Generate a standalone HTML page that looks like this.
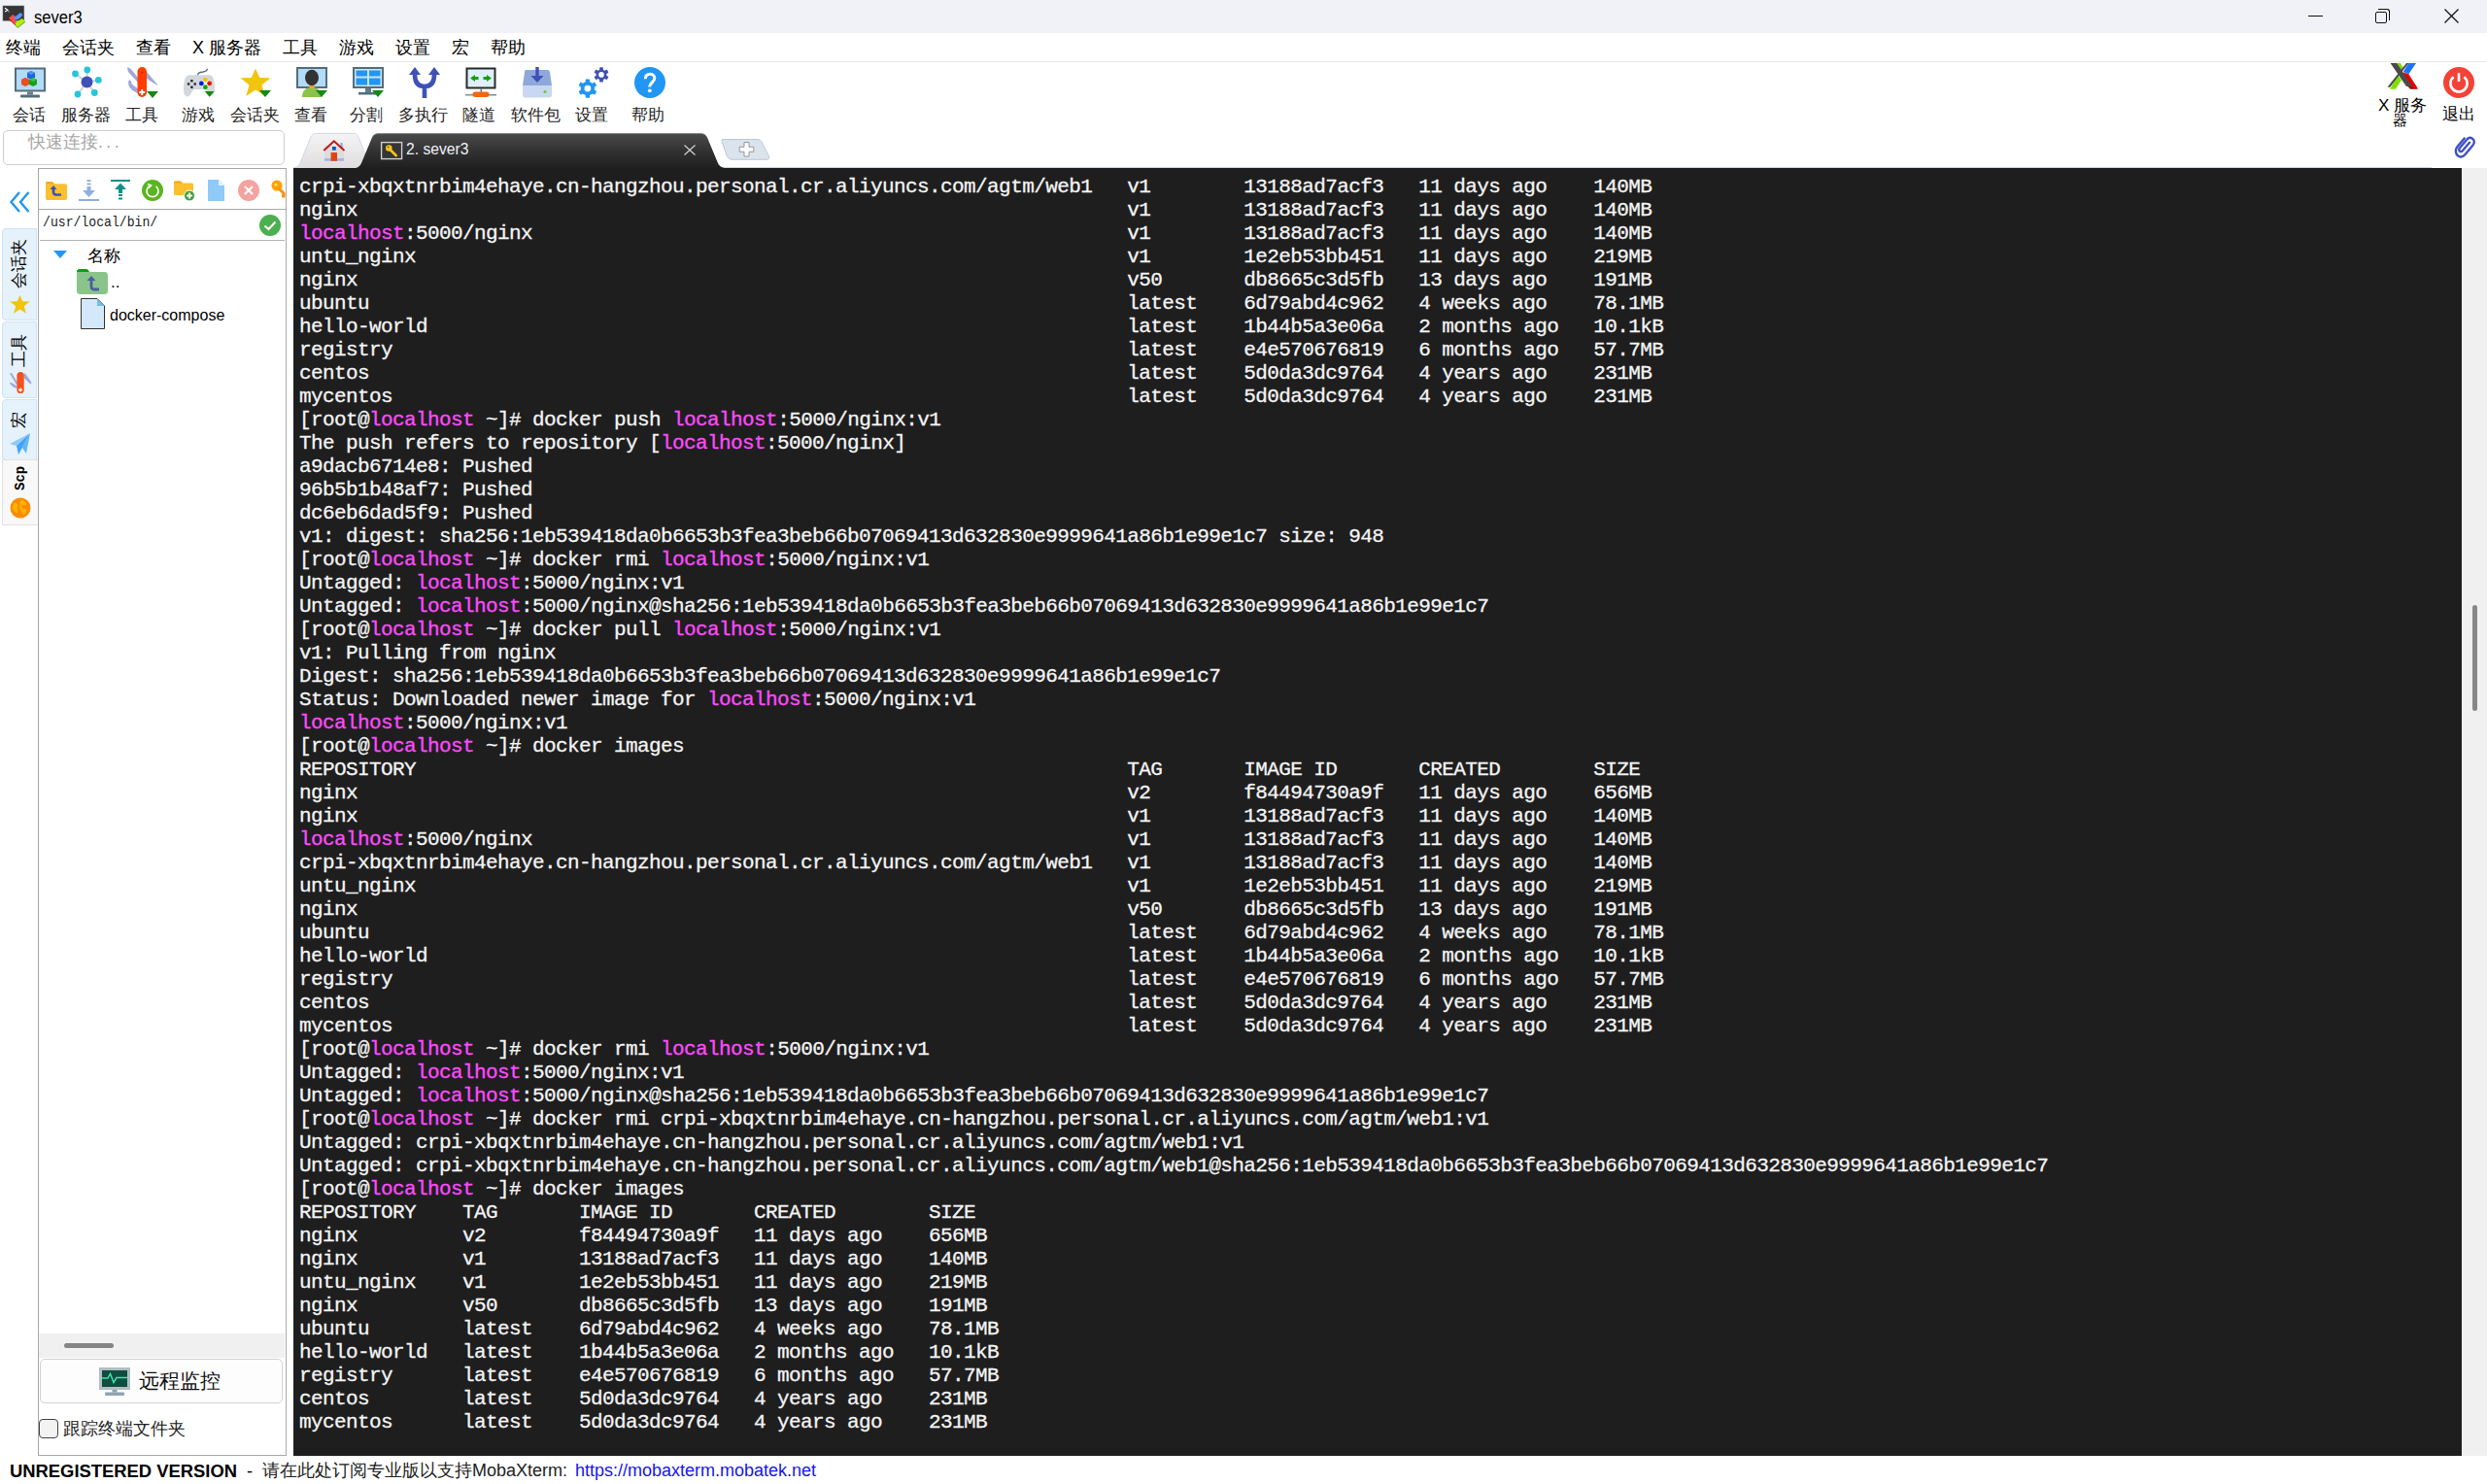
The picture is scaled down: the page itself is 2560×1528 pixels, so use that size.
<!DOCTYPE html>
<html><head><meta charset="utf-8"><title>sever3</title>
<style>
*{box-sizing:border-box}
html,body{margin:0;padding:0;width:2560px;height:1528px;overflow:hidden;background:#fff;font-family:"Liberation Sans",sans-serif;color:#000}
.a{position:absolute}
svg{position:absolute;overflow:visible}
#title{left:0;top:0;width:2560px;height:34px;background:#f1f2f7}
#title .t{left:35px;top:7px;font-size:18px;line-height:22px;transform:scaleX(0.92);transform-origin:0 0}
#menu{left:0;top:34px;width:2560px;height:30px;background:#fff;border-bottom:1px solid #e8e8e8}
#menu span{position:absolute;top:4px;font-size:18px;line-height:22px}
.lbl{position:absolute;top:109px;font-size:17px;line-height:20px;text-align:center;width:80px;white-space:nowrap;color:#262626}
#qc{left:3px;top:134px;width:290px;height:36px;border:1px solid #cfcfcf;border-radius:5px;background:#fff}
#qc span{position:absolute;left:25px;top:-1px;font-size:17.5px;color:#a8a8a8;white-space:nowrap}
#term{left:302px;top:173px;width:2232px;height:1326px;background:#1e1e1e}
#term pre{position:absolute;left:6px;top:8px;margin:0;font-family:"Liberation Mono",monospace;font-size:21px;letter-spacing:-0.6px;line-height:24px;color:#f4f4f4;white-space:pre;-webkit-text-stroke:0.3px #f4f4f4}
#term pre b{font-weight:normal;color:#ff4aff;-webkit-text-stroke:0.3px #ff4aff}
#vsb{left:2535px;top:173px;width:25px;height:1326px;background:#f0f0f0}
#vsb i{position:absolute;left:10px;top:450px;width:5px;height:109px;border-radius:3px;background:#878787}
#sftp{left:39px;top:173px;width:256px;height:1326px;border:1px solid #a9a9a9;background:#fff}
#status{left:0;top:1499px;width:2560px;height:29px;background:#fff}
.vt{position:absolute;left:2px;width:36px;background:#e5f1fb;border:1px solid #cfe3f3;border-radius:4px 0 0 4px}
.vtt{position:absolute;font-size:17px;line-height:20px;white-space:nowrap;transform:rotate(-90deg);transform-origin:0 0}
</style></head><body>

<div id="title" class="a">
  <svg style="left:0px;top:0px" width="30" height="32" viewBox="0 0 30 32">
    <rect x="2.8" y="5.8" width="22.2" height="16" fill="#353535" stroke="#cfcfcf" stroke-width="0.6"/>
    <path d="M5 8.3 L8 10.5 L5 12" stroke="#fff" stroke-width="1.1" fill="none"/>
    <rect x="8.5" y="11.5" width="1" height="1" fill="#ddd"/>
    <path d="M8.9 18.8 L13.2 15 L18 18.5 L16 20.5 L18 23.3 L16 25.3 Z" fill="#f05050"/>
    <path d="M8.9 18.8 L8.9 20 L16 26.5 L16 25.3 Z" fill="#c01818"/>
    <path d="M14.2 18.5 L20.8 13 L23.3 14.8 L22.5 16.8 L20 19 L17.6 20.5 Z" fill="#5599ff"/>
    <path d="M16 23.3 L22.5 19 L25.8 21.5 L18.4 27.8 L16 25.8 Z" fill="#b0f000"/>
    <path d="M16 25.8 L18.4 27.8 L25.8 21.5 L25.8 23 L18.4 29 L16 27 Z" fill="#6fb000"/>
  </svg>
  <div class="a t">sever3</div>
  <div class="a" style="left:2376px;top:16px;width:15px;height:1px;background:#111"></div>
  <div class="a" style="left:2445px;top:12px;width:12px;height:12px;border:1.3px solid #111;border-radius:2px"></div>
  <div class="a" style="left:2448px;top:9px;width:12px;height:12px;border-top:1.3px solid #111;border-right:1.3px solid #111;border-radius:0 3px 0 0"></div>
  <svg style="left:2516px;top:9px" width="15" height="15" viewBox="0 0 15 15"><path d="M0.5 0.5 L14.5 14.5 M14.5 0.5 L0.5 14.5" stroke="#111" stroke-width="1.3"/></svg>
</div>

<div id="menu" class="a">
  <span style="left:6px">终端</span>
  <span style="left:64px">会话夹</span>
  <span style="left:140px">查看</span>
  <span style="left:198px">X 服务器</span>
  <span style="left:291px">工具</span>
  <span style="left:349px">游戏</span>
  <span style="left:407px">设置</span>
  <span style="left:465px">宏</span>
  <span style="left:505px">帮助</span>
</div>

<div id="tb">
<!-- 1 session -->
<svg style="left:15px;top:69px" width="32" height="32" viewBox="0 0 32 32">
  <rect x="0" y="0.5" width="32" height="25" fill="#546e7a"/>
  <rect x="2" y="2.5" width="28" height="21" fill="#b3dbf7"/>
  <rect x="13" y="25.5" width="6" height="3" fill="#607d8b"/>
  <rect x="6" y="28.5" width="20" height="3" rx="1" fill="#546e7a"/>
  <path d="M13 6 L17 4 L21 6 L21 11 L17 13 L13 11 Z" fill="#1e63e0"/><path d="M13 6 L17 8 L21 6 L17 4Z" fill="#4f8ff5"/>
  <path d="M7 13 L11 11 L15 13 L15 18 L11 20 L7 18 Z" fill="#e8511e"/><path d="M7 13 L11 15 L15 13 L11 11Z" fill="#f4492b"/>
  <path d="M15 13 L19 11 L23 13 L23 18 L19 20 L15 18 Z" fill="#16a01e"/><path d="M15 13 L19 15 L23 13 L19 11Z" fill="#39c53a"/>
</svg>
<!-- 2 servers -->
<svg style="left:73px;top:69px" width="32" height="32" viewBox="0 0 32 32">
  <g stroke="#cfd8dc" stroke-width="2.2">
  <line x1="16.5" y1="15.6" x2="4.5" y2="7"/><line x1="16.5" y1="15.6" x2="16.8" y2="3"/><line x1="16.5" y1="15.6" x2="28.3" y2="13.4"/><line x1="16.5" y1="15.6" x2="24.3" y2="26.5"/><line x1="16.5" y1="15.6" x2="7" y2="28"/></g>
  <circle cx="16.5" cy="15.6" r="6" fill="#3f51b5"/>
  <g fill="#26c6da"><circle cx="4.5" cy="7" r="3.4"/><circle cx="16.8" cy="3" r="3.4"/><circle cx="28.3" cy="13.4" r="3.4"/><circle cx="24.3" cy="26.5" r="3.4"/><circle cx="7" cy="28" r="3.4"/></g>
</svg>
<!-- 3 tools -->
<svg style="left:131px;top:69px" width="32" height="32" viewBox="0 0 32 32">
  <path d="M0.3 0 C2 1 4 2 5 3.5 L11 11 L11 16 L1.5 5.5 C0.5 4 0 2 0.3 0Z" fill="#9fa8da"/>
  <path d="M1.5 14 C3 13 4.5 14 4 16 C5 18 7 20 11 22 L11 27 C6 25 2.5 22 1.5 19 C1 17 1 15 1.5 14Z" fill="#9fa8da"/>
  <path d="M20 5 L31 18 L31 19 L20 12 Z" fill="#9fa8da"/>
  <rect x="10.5" y="0" width="9.5" height="31" rx="4.7" fill="#ff3d00"/>
  <circle cx="15.3" cy="5.5" r="1.3" fill="#d83000"/>
  <path d="M15.2 23 v6 M12.2 26 h6" stroke="#fff" stroke-width="2"/>
  <path d="M20 25 L32 25 L26 32 Z" fill="#138a13"/>
</svg>
<!-- 4 games -->
<svg style="left:189px;top:69px" width="32" height="32" viewBox="0 0 32 32">
  <path d="M14.4 9.5 C14.4 6 16 5.5 20 5 C23 4.5 24.5 4 24.5 1.8" stroke="#546e7a" stroke-width="1.3" fill="none"/>
  <path d="M6 8.3 L27 8.3 C30 8.3 31.5 12 32 20 C32.3 26 31 30 28 30 C25 30 23.5 24 21 23 L11 23 C8.5 24 7 30.5 4 30.5 C1 30.5 -0.3 27 0 21 C0.5 13 2 8.3 6 8.3Z" fill="#d3d8dc"/>
  <g fill="#262626"><rect x="7.2" y="13" width="2.4" height="2.4"/><rect x="7.2" y="19.6" width="2.4" height="2.4"/><rect x="3.9" y="16.3" width="2.4" height="2.4"/><rect x="10.5" y="16.3" width="2.4" height="2.4"/></g>
  <path d="M22.4 10.2 L27.5 16.9 L22.4 23.6 L17.3 16.9Z" fill="#fff" opacity="0.9"/>
  <circle cx="22.4" cy="13.1" r="2.4" fill="#f2c200"/><circle cx="18.4" cy="16.9" r="2.4" fill="#0a14f0"/><circle cx="26.6" cy="16.9" r="2.4" fill="#f00a0a"/><circle cx="22.4" cy="20.7" r="2.4" fill="#0aac0a"/>
  <path d="M21.8 25 L31.5 25 L26.6 30.8 Z" fill="#138a13"/>
</svg>
<!-- 5 bookmarks -->
<svg style="left:247px;top:69px" width="32" height="32" viewBox="0 0 32 32">
  <path d="M16 1.5 L20.3 11 L31.5 11.3 L22.5 18.5 L25.8 30 L16 23.5 L6.2 30 L9.5 18.5 L0.5 11.3 L11.7 11 Z" fill="#f1c40f"/>
  <path d="M20 24 L32 24 L26 31 Z" fill="#138a13"/>
</svg>
<!-- 6 view -->
<svg style="left:305px;top:69px" width="32" height="32" viewBox="0 0 32 32">
  <rect x="0" y="0" width="32" height="22" fill="#546e7a"/>
  <rect x="2" y="2" width="28" height="18" fill="#b3dbf7"/>
  <path d="M6 31 C6 24 10 21 16 21 C22 21 26 24 26 31Z" fill="#8bc34a"/>
  <rect x="13.5" y="17" width="5" height="5" fill="#f4a030"/>
  <ellipse cx="16" cy="11" rx="7" ry="8.3" fill="#333"/>
  <path d="M20 24 L32 24 L26 31 Z" fill="#138a13"/>
</svg>
<!-- 7 split -->
<svg style="left:363px;top:69px" width="32" height="32" viewBox="0 0 32 32">
  <rect x="0" y="0" width="32" height="22" fill="#546e7a"/>
  <rect x="2" y="2" width="28" height="18" fill="#c7e4f7"/>
  <rect x="3.5" y="3.5" width="11.5" height="6" fill="#2196f3"/><rect x="17" y="3.5" width="11.5" height="6" fill="#2196f3"/>
  <rect x="3.5" y="11.5" width="11.5" height="7" fill="#2196f3"/><rect x="17" y="11.5" width="11.5" height="7" fill="#2196f3"/>
  <rect x="13" y="22" width="6" height="4" fill="#607d8b"/><rect x="6" y="26" width="20" height="2.5" fill="#546e7a"/>
  <path d="M20 24 L32 24 L26 31 Z" fill="#138a13"/>
</svg>
<!-- 8 multiexec -->
<svg style="left:421px;top:69px" width="32" height="32" viewBox="0 0 32 32">
  <path d="M16 32 L16 20 C8 20 6 14 6 8 M16 20 C24 20 26 14 26 8" stroke="#3f51b5" stroke-width="4.6" fill="none"/>
  <path d="M0 8 L6 0 L12 8Z M20 8 L26 0 L32 8Z" fill="#3f51b5"/>
</svg>
<!-- 9 tunneling -->
<svg style="left:479px;top:69px" width="32" height="32" viewBox="0 0 32 32">
  <rect x="0.5" y="0.5" width="31" height="22" fill="#2b2b2b"/>
  <rect x="2.5" y="2.5" width="27" height="18" fill="#dff0fb"/>
  <path d="M5 11.5 L10 8 L10 15Z M27 11.5 L22 8 L22 15Z" fill="#12a012"/>
  <rect x="9" y="10" width="4.5" height="3" fill="#12a012"/><rect x="18.5" y="10" width="4.5" height="3" fill="#12a012"/>
  <rect x="15.5" y="22" width="1.5" height="4" fill="#607d8b"/>
  <rect x="0" y="28" width="32" height="1.5" fill="#78909c"/>
  <rect x="7.5" y="25.5" width="17" height="5.5" rx="2.7" fill="#f4670f"/>
</svg>
<!-- 10 packages -->
<svg style="left:537px;top:69px" width="32" height="32" viewBox="0 0 32 32">
  <path d="M4 3 L27 3 C28 3 28.5 4 29 5 L31 19 L1 19 L3 5 C3 4 3.5 3 4 3Z" fill="#8ea9d9"/>
  <path d="M1 19 L31 19 L31 29 C31 30.5 30 31.5 28.5 31.5 L3.5 31.5 C2 31.5 1 30.5 1 29Z" fill="#c9d8f0"/>
  <rect x="14.3" y="0" width="3.4" height="10" fill="#3f51b5"/><path d="M9.5 9 L22.5 9 L16 16Z" fill="#3f51b5"/>
  <circle cx="24" cy="25.5" r="1.6" fill="#5ad33a"/>
</svg>
<!-- 11 settings -->
<svg style="left:595px;top:69px" width="32" height="32" viewBox="0 0 32 32"><circle cx="9.9" cy="22.1" r="7.2" fill="#2196f3"/><rect x="7.70" y="12.50" width="4.4" height="19.20" rx="0.6" fill="#2196f3" transform="rotate(0 9.9 22.1)"/><rect x="7.70" y="12.50" width="4.4" height="19.20" rx="0.6" fill="#2196f3" transform="rotate(60 9.9 22.1)"/><rect x="7.70" y="12.50" width="4.4" height="19.20" rx="0.6" fill="#2196f3" transform="rotate(120 9.9 22.1)"/><circle cx="9.9" cy="22.1" r="3.4" fill="#fff"/><circle cx="24" cy="7.9" r="5.4" fill="#3f51b5"/><rect x="22.15" y="0.30" width="3.7" height="15.20" rx="0.6" fill="#3f51b5" transform="rotate(0 24 7.9)"/><rect x="22.15" y="0.30" width="3.7" height="15.20" rx="0.6" fill="#3f51b5" transform="rotate(60 24 7.9)"/><rect x="22.15" y="0.30" width="3.7" height="15.20" rx="0.6" fill="#3f51b5" transform="rotate(120 24 7.9)"/><circle cx="24" cy="7.9" r="2.8" fill="#fff"/></svg>
<!-- 12 help -->
<svg style="left:653px;top:69px" width="32" height="32" viewBox="0 0 32 32">
  <circle cx="16" cy="16" r="16" fill="#2196f3"/>
  <path d="M11.3 12.3 C11.3 8.8 13.5 7.3 16.2 7.3 C19 7.3 20.8 9.2 20.8 11.6 C20.8 14.2 18.3 15.6 16.8 17.6 C16 18.7 15.7 19.6 15.7 20.5" stroke="#fff" stroke-width="3" fill="none"/>
  <circle cx="15.8" cy="24.3" r="1.9" fill="#fff"/>
</svg>

<div class="lbl" style="left:-10px">会话</div>
<div class="lbl" style="left:48px">服务器</div>
<div class="lbl" style="left:106px">工具</div>
<div class="lbl" style="left:164px">游戏</div>
<div class="lbl" style="left:222px">会话夹</div>
<div class="lbl" style="left:280px">查看</div>
<div class="lbl" style="left:337px">分割</div>
<div class="lbl" style="left:395px">多执行</div>
<div class="lbl" style="left:453px">隧道</div>
<div class="lbl" style="left:511px">软件包</div>
<div class="lbl" style="left:569px">设置</div>
<div class="lbl" style="left:627px">帮助</div>

<!-- X server -->
<svg style="left:2450px;top:60px" width="50" height="40" viewBox="0 0 50 40">
  <path d="M17.3 5.1 L21 5.1 L24.5 10.5 L22.5 13.5 Z" fill="#7ee000"/>
  <path d="M29.4 5.1 L37 5.1 L29.4 16.2 L23.7 14 Z" fill="#1a73ff"/>
  <path d="M23.7 14.6 L29.4 16.2 L39 31.6 L31 31.6 L27.5 28 Z" fill="#e80000"/>
  <path d="M29 29 L39 31.6 L31 31.6 Z" fill="#8a0000"/>
  <path d="M18.4 17.5 L22 22.4 L15.8 31.8 L10 31.8 Z" fill="#7ee000"/>
  <path d="M27 5.1 L29.4 5.1 L10.2 29.8 L7.5 29.8 Z" fill="#4a4a4a"/>
  <path d="M10.6 5.1 L17.3 5.1 L33 29.1 L27 29.1 Z" fill="#4a4a4a"/>
</svg>
<div class="a" style="left:2448px;top:99px;font-size:17px;line-height:20px;white-space:nowrap">X 服务</div>
<div class="a" style="left:2463px;top:116px;font-size:15px;line-height:16px">器</div>
<svg style="left:2515px;top:69px" width="32" height="32" viewBox="0 0 32 32">
  <circle cx="16" cy="16" r="16" fill="#f44336"/>
  <path d="M10.6 10.2 A8.6 8.6 0 1 0 21.4 10.2" stroke="#fff" stroke-width="2.6" fill="none"/>
  <path d="M16 6 V15" stroke="#fff" stroke-width="2.6"/>
</svg>
<div class="a" style="left:2514px;top:108px;font-size:17px;line-height:20px;white-space:nowrap">退出</div>
<svg style="left:2526px;top:141px" width="22" height="22" viewBox="0 0 22 22">
  <path d="M10.7 1.4 L3.5 10 C1 13 1.5 18 4.5 19.8 C7.5 21.6 10 20 12 17.5 L19.5 8.5 C21.5 6 21 3 19 1.7 C17 0.4 14.5 1 13 3 L5.8 11.5 C5 12.5 5 14 6 14.7 C7 15.4 8.2 15 9 14 L16 5.7" stroke="#3f51c5" stroke-width="2.4" fill="none" stroke-linecap="round"/>
</svg>
</div>


<div id="qc" class="a"><span>快速连接<i style="font-style:normal;letter-spacing:3.5px">...</i></span></div>

<!-- tab bar -->
<div class="a" style="left:368px;top:172px;width:2135px;height:1px;background:#c5d3e0"></div>
<svg style="left:296px;top:130px" width="510" height="45" viewBox="296 130 510 45">
  <defs>
    <linearGradient id="hg" x1="0" y1="0" x2="0" y2="1"><stop offset="0" stop-color="#f5f4f4"/><stop offset="1" stop-color="#dfdddd"/></linearGradient>
    <linearGradient id="ag" x1="0" y1="0" x2="0" y2="1"><stop offset="0" stop-color="#4a4a4a"/><stop offset="0.55" stop-color="#303030"/><stop offset="1" stop-color="#1f1f1f"/></linearGradient>
  </defs>
  <line x1="368" y1="172.5" x2="806" y2="172.5" stroke="#c5d3e0" stroke-width="1"/>
  <path d="M302 173 C305 172.5 307.5 171 308.6 168.6 L319.7 141.7 C321 138.5 323 137.4 326 137.4 L363.5 137.4 C366.5 137.4 368 138.5 369.2 141.7 L378 164 L378 173 Z" fill="url(#hg)" stroke="#c9d6e3" stroke-width="0.9"/>
  <path d="M366.3 173 C369 172.5 371.3 170 372.4 167 L382.8 142 C384.2 138.8 386.5 137.4 390 137.4 L721 137.4 C724.5 137.4 726.8 138.8 728.2 142 L738.6 167 C739.7 170 742 172.5 745.7 173 Z" fill="url(#ag)"/>
  <path d="M383.5 141 C385 138.5 387 137.6 390 137.6 L721 137.6 C724 137.6 726 138.5 727.5 141" stroke="#6d7b88" stroke-width="0.8" fill="none"/>
  <!-- home icon -->
  <rect x="334" y="150" width="20" height="16" fill="#dcdcdc"/>
  <rect x="350.5" y="147" width="2" height="5" fill="#8d9be0"/>
  <path d="M333.3 155 L343.8 145.2 L354.5 155" stroke="#c21515" stroke-width="1.9" fill="none"/>
  <rect x="342" y="151" width="3.8" height="3.7" fill="#0d5bb5"/>
  <rect x="334" y="163" width="20" height="2.8" fill="#a9b5e5"/>
  <rect x="340.6" y="157" width="6.4" height="8.8" fill="#e04414"/>
  <!-- key box -->
  <rect x="392.6" y="146.6" width="21" height="17" fill="#353535" stroke="#cfcfcf" stroke-width="1.4"/>
  <circle cx="400.3" cy="152.5" r="3.3" fill="#f5c518"/>
  <path d="M401.5 154 L407.8 160.2" stroke="#f5c518" stroke-width="2.6" stroke-linecap="round"/>
  <circle cx="399.6" cy="151.5" r="0.8" fill="#353535"/>
  <!-- close -->
  <path d="M704.5 149.5 L715.5 159.5 M715.5 149.5 L704.5 159.5" stroke="#d6d6d6" stroke-width="1.1"/>
  <!-- new tab -->
  <path d="M743.5 143.5 L779 143.5 C782 143.5 783.5 144.5 784.5 147 L791.5 161 C792.3 163 791.5 164.3 789 164.3 L754 164.3 C751 164.3 749 162.5 748 160 L743 145.5 C742.7 144.3 742.9 143.5 743.5 143.5Z" fill="#dbe3ec" stroke="#b4c4d4" stroke-width="0.9"/>
  <path d="M766 146.5 L771 146.5 L771 151.3 L775.8 151.3 L775.8 156.3 L771 156.3 L771 161 L766 161 L766 156.3 L761.2 156.3 L761.2 151.3 L766 151.3Z" fill="#fbfbfb" stroke="#8e8e8e" stroke-width="0.9"/>
</svg>
<div class="a" style="left:418px;top:143px;font-size:17px;line-height:22px;color:#eef2f8;white-space:nowrap;transform:scaleX(0.92);transform-origin:0 0">2. sever3</div>


<div id="term" class="a"><pre>crpi-xbqxtnrbim4ehaye.cn-hangzhou.personal.cr.aliyuncs.com/agtm/web1   v1        13188ad7acf3   11 days ago    140MB
nginx                                                                  v1        13188ad7acf3   11 days ago    140MB
<b>localhost</b>:5000/nginx                                                   v1        13188ad7acf3   11 days ago    140MB
untu_nginx                                                             v1        1e2eb53bb451   11 days ago    219MB
nginx                                                                  v50       db8665c3d5fb   13 days ago    191MB
ubuntu                                                                 latest    6d79abd4c962   4 weeks ago    78.1MB
hello-world                                                            latest    1b44b5a3e06a   2 months ago   10.1kB
registry                                                               latest    e4e570676819   6 months ago   57.7MB
centos                                                                 latest    5d0da3dc9764   4 years ago    231MB
mycentos                                                               latest    5d0da3dc9764   4 years ago    231MB
[root@<b>localhost</b> ~]# docker push <b>localhost</b>:5000/nginx:v1
The push refers to repository [<b>localhost</b>:5000/nginx]
a9dacb6714e8: Pushed
96b5b1b48af7: Pushed
dc6eb6dad5f9: Pushed
v1: digest: sha256:1eb539418da0b6653b3fea3beb66b07069413d632830e9999641a86b1e99e1c7 size: 948
[root@<b>localhost</b> ~]# docker rmi <b>localhost</b>:5000/nginx:v1
Untagged: <b>localhost</b>:5000/nginx:v1
Untagged: <b>localhost</b>:5000/nginx@sha256:1eb539418da0b6653b3fea3beb66b07069413d632830e9999641a86b1e99e1c7
[root@<b>localhost</b> ~]# docker pull <b>localhost</b>:5000/nginx:v1
v1: Pulling from nginx
Digest: sha256:1eb539418da0b6653b3fea3beb66b07069413d632830e9999641a86b1e99e1c7
Status: Downloaded newer image for <b>localhost</b>:5000/nginx:v1
<b>localhost</b>:5000/nginx:v1
[root@<b>localhost</b> ~]# docker images
REPOSITORY                                                             TAG       IMAGE ID       CREATED        SIZE
nginx                                                                  v2        f84494730a9f   11 days ago    656MB
nginx                                                                  v1        13188ad7acf3   11 days ago    140MB
<b>localhost</b>:5000/nginx                                                   v1        13188ad7acf3   11 days ago    140MB
crpi-xbqxtnrbim4ehaye.cn-hangzhou.personal.cr.aliyuncs.com/agtm/web1   v1        13188ad7acf3   11 days ago    140MB
untu_nginx                                                             v1        1e2eb53bb451   11 days ago    219MB
nginx                                                                  v50       db8665c3d5fb   13 days ago    191MB
ubuntu                                                                 latest    6d79abd4c962   4 weeks ago    78.1MB
hello-world                                                            latest    1b44b5a3e06a   2 months ago   10.1kB
registry                                                               latest    e4e570676819   6 months ago   57.7MB
centos                                                                 latest    5d0da3dc9764   4 years ago    231MB
mycentos                                                               latest    5d0da3dc9764   4 years ago    231MB
[root@<b>localhost</b> ~]# docker rmi <b>localhost</b>:5000/nginx:v1
Untagged: <b>localhost</b>:5000/nginx:v1
Untagged: <b>localhost</b>:5000/nginx@sha256:1eb539418da0b6653b3fea3beb66b07069413d632830e9999641a86b1e99e1c7
[root@<b>localhost</b> ~]# docker rmi crpi-xbqxtnrbim4ehaye.cn-hangzhou.personal.cr.aliyuncs.com/agtm/web1:v1
Untagged: crpi-xbqxtnrbim4ehaye.cn-hangzhou.personal.cr.aliyuncs.com/agtm/web1:v1
Untagged: crpi-xbqxtnrbim4ehaye.cn-hangzhou.personal.cr.aliyuncs.com/agtm/web1@sha256:1eb539418da0b6653b3fea3beb66b07069413d632830e9999641a86b1e99e1c7
[root@<b>localhost</b> ~]# docker images
REPOSITORY    TAG       IMAGE ID       CREATED        SIZE
nginx         v2        f84494730a9f   11 days ago    656MB
nginx         v1        13188ad7acf3   11 days ago    140MB
untu_nginx    v1        1e2eb53bb451   11 days ago    219MB
nginx         v50       db8665c3d5fb   13 days ago    191MB
ubuntu        latest    6d79abd4c962   4 weeks ago    78.1MB
hello-world   latest    1b44b5a3e06a   2 months ago   10.1kB
registry      latest    e4e570676819   6 months ago   57.7MB
centos        latest    5d0da3dc9764   4 years ago    231MB
mycentos      latest    5d0da3dc9764   4 years ago    231MB</pre></div>
<div id="vsb" class="a"><i></i></div>

<!-- left vertical strip -->
<svg style="left:10px;top:197px" width="21" height="22" viewBox="0 0 21 22">
  <path d="M10 1 L1.5 11 L10 21 M19.5 1 L11 11 L19.5 21" stroke="#2196f3" stroke-width="2.4" fill="none"/>
</svg>
<div class="vt" style="top:235px;height:95px"></div>
<div class="vtt" style="left:10px;top:297px">会话夹</div>
<svg style="left:10px;top:303px" width="21" height="21" viewBox="0 0 32 32"><path d="M16 1.5 L20.3 11 L31.5 11.3 L22.5 18.5 L25.8 30 L16 23.5 L6.2 30 L9.5 18.5 L0.5 11.3 L11.7 11 Z" fill="#f1c40f"/></svg>
<div class="vt" style="top:331px;height:79px"></div>
<div class="vtt" style="left:10px;top:378px">工具</div>
<svg style="left:9px;top:382px" width="24" height="24" viewBox="0 0 24 24">
  <path d="M1 2.5 L3 2 L9 12 L8.5 15 Z" fill="#9fa8da"/>
  <path d="M1 12 C2 11 4 13 6 14 L8.5 16 L8 18 C5 17 2 15 1 12Z" fill="#9fa8da"/>
  <path d="M15.5 3 L17 2.5 L23.5 12 L22.5 13.5 L15.5 7 Z" fill="#9fa8da"/>
  <rect x="8.4" y="1" width="7.3" height="22" rx="3.6" fill="#f4511e"/>
  <path d="M12 17.5 v4 M10 19.5 h4" stroke="#fff" stroke-width="1.3"/>
</svg>
<div class="vt" style="top:411px;height:63px"></div>
<div class="vtt" style="left:10px;top:441px">宏</div>
<svg style="left:10px;top:446px" width="22" height="22" viewBox="0 0 22 22">
  <path d="M21 0 L0 11 L7 13 Z" fill="#90caf9"/><path d="M21 0 L7 13 L9 22 Z" fill="#42a5f5"/><path d="M21 0 L9 22 L13 15 Z" fill="#1e88e5"/><path d="M21 0 L13 15 L17 21Z" fill="#64b5f6"/>
</svg>
<div class="a" style="left:2px;top:473px;width:38px;height:68px;background:#f8f8f8;border:1px solid #e2e2e2;border-right:none"></div>
<div class="vtt" style="left:11px;top:505px;font-weight:bold;font-size:14px;font-family:'Liberation Mono',monospace">Scp</div>
<svg style="left:10px;top:512px" width="22" height="22" viewBox="0 0 22 22">
  <circle cx="11" cy="11" r="10.5" fill="#fb8c00"/>
  <path d="M4 6 C7 5 9 7 8 10 C7 12 9 13 8 16 C6 17 4 14 3 11Z M12 3 C15 3 18 6 17 8 C15 9 13 7 12 9 C11 10 14 12 16 12 C18 13 17 17 14 18 C12 17 13 14 11 13 C10 11 10 5 12 3Z" fill="#ffb300"/>
</svg>

<div id="sftp" class="a"></div>
<!-- sftp toolbar -->
<svg style="left:47px;top:186px" width="22" height="20" viewBox="0 0 22 22" preserveAspectRatio="none">
  <path d="M0 3 C0 2 1 1.5 2 1.5 L7 1.5 L9 3.5 L20 3.5 C21 3.5 22 4.5 22 5.5 L22 20 C22 21 21 22 20 22 L2 22 C1 22 0 21 0 20Z" fill="#fbc02d"/>
  <path d="M0 3 C0 2 1 1.5 2 1.5 L7 1.5 L9 3.5 L0 3.5Z" fill="#f5a623"/>
  <path d="M11 16 C9 16 8 15 8 13 L8 9" stroke="#3f51b5" stroke-width="2.6" fill="none"/><path d="M4.5 10 L8 5.5 L11.5 10Z" fill="#3f51b5"/><path d="M10 16 L16 16" stroke="#3f51b5" stroke-width="2.6"/>
</svg>
<svg style="left:81px;top:185px" width="21" height="22" viewBox="0 0 21 22">
  <rect x="8.5" y="0" width="4" height="2" fill="#8fb0e0"/><rect x="8.5" y="3.5" width="4" height="2" fill="#8fb0e0"/><rect x="8.5" y="7" width="4" height="5" fill="#8fb0e0"/>
  <path d="M4 11 L17 11 L10.5 18Z" fill="#8fb0e0"/><rect x="0" y="20" width="21" height="2" fill="#8fb0e0"/>
</svg>
<svg style="left:114px;top:185px" width="21" height="22" viewBox="0 0 21 22">
  <rect x="0" y="0" width="20" height="2" fill="#0e9087"/><path d="M4 10 L16 10 L10 3.5Z" fill="#0e9087"/>
  <rect x="8" y="10" width="4" height="4" fill="#0e9087"/><rect x="8" y="15" width="4" height="2" fill="#0e9087"/><rect x="8" y="18.5" width="4" height="2" fill="#0e9087"/>
</svg>
<svg style="left:146px;top:185px" width="22" height="22" viewBox="0 0 22 22">
  <circle cx="11" cy="11" r="11" fill="#5ab520"/>
  <path d="M7.5 6.8 A6 6 0 1 0 14.5 6.8" stroke="#fff" stroke-width="1.6" fill="none"/><path d="M6 4.5 L9.5 6 L6.5 9" stroke="#fff" stroke-width="1.6" fill="none"/>
</svg>
<svg style="left:179px;top:185px" width="23" height="23" viewBox="0 0 23 23">
  <path d="M0 3 C0 2 1 1.5 2 1.5 L7 1.5 L9 3.5 L19 3.5 C20 3.5 20 4.5 20 5.5 L20 16 L0 16Z" fill="#fbc02d"/>
  <path d="M0 3 C0 2 1 1.5 2 1.5 L7 1.5 L9 3.5 L0 3.5Z" fill="#f5a623"/>
  <circle cx="16" cy="16.5" r="5.5" fill="#43a047" stroke="#fff" stroke-width="1"/><path d="M16 13.5 v6 M13 16.5 h6" stroke="#fff" stroke-width="1.8"/>
</svg>
<svg style="left:214px;top:185px" width="18" height="22" viewBox="0 0 18 22">
  <path d="M0 0 L11 0 L17 6 L17 22 L0 22Z" fill="#90caf9"/><path d="M11 0 L11 6 L17 6Z" fill="#e3f2fd"/>
</svg>
<svg style="left:245px;top:185px" width="22" height="22" viewBox="0 0 22 22">
  <circle cx="11" cy="11" r="11" fill="#f4a3a0"/><path d="M7 7 L15 15 M15 7 L7 15" stroke="#fff" stroke-width="2.2"/>
</svg>
<svg style="left:279px;top:185px" width="13" height="20" viewBox="0 0 13 20">
  <circle cx="6" cy="6" r="5.5" fill="#ffa000"/><circle cx="5" cy="5" r="1.6" fill="#ffe082"/><path d="M8 9 L13 14 L13 17 L11 17" stroke="#ff8f00" stroke-width="3" fill="none"/>
</svg>
<div class="a" style="left:40px;top:215px;width:254px;height:1px;background:#a8a8a8"></div>
<div class="a" style="left:41px;top:216px;width:252px;height:32px;border-bottom:1px solid #b5b5b5"></div>
<div class="a" style="left:44px;top:220px;font-family:'Liberation Mono',monospace;font-size:15px;line-height:20px;white-space:nowrap;color:#222;transform:scaleX(0.875);transform-origin:0 0">/usr/local/bin/</div>
<svg style="left:267px;top:221px" width="22" height="22" viewBox="0 0 22 22">
  <circle cx="11" cy="11" r="11" fill="#4caf50"/><path d="M5.5 11.5 L9.5 15 L16.5 7.5" stroke="#fff" stroke-width="2.2" fill="none"/>
</svg>
<svg style="left:55px;top:258px" width="14" height="8" viewBox="0 0 14 8"><path d="M0 0 L14 0 L7 8Z" fill="#2196f3"/></svg>
<div class="a" style="left:90px;top:254px;font-size:17px;line-height:20px">名称</div>
<svg style="left:79px;top:277px" width="32" height="26" viewBox="0 0 32 26">
  <path d="M0 4 C0 1 1 0 4 0 L9 0 C11 0 12 1 13 3 L28 3 C31 3 32 4 32 7 L32 23 C32 25 31 26 28 26 L4 26 C1 26 0 25 0 23Z" fill="#8bc48a"/>
  <path d="M0 4 C0 1 1 0 4 0 L9 0 C11 0 12 1 13 3 L0 3Z" fill="#129c12"/>
  <path d="M23 21 L18 21 C16 21 15 20 15 18 L15 11" stroke="#4d5ea0" stroke-width="2.8" fill="none"/><path d="M10.5 12 L15 7 L19.5 12Z" fill="#4d5ea0"/>
</svg>
<div class="a" style="left:114px;top:281px;font-size:17px;line-height:20px">..</div>
<svg style="left:83px;top:307px" width="25" height="32" viewBox="0 0 25 32">
  <path d="M0.5 0.5 L17 0.5 L24.5 8 L24.5 31.5 L0.5 31.5Z" fill="#d3e9fb" stroke="#333" stroke-width="1"/><path d="M17 1 L17 8 L24 8Z" fill="#6ec0f5"/>
</svg>
<div class="a" style="left:113px;top:315px;font-size:16px;line-height:20px;white-space:nowrap">docker-compose</div>

<div class="a" style="left:40px;top:1373px;width:253px;height:25px;background:#f0f0f0"></div>
<div class="a" style="left:66px;top:1383px;width:51px;height:5px;border-radius:3px;background:#858585"></div>
<div class="a" style="left:41px;top:1399px;width:250px;height:46px;border:1px solid #d2d2d2;border-radius:5px;background:#fdfdfd"></div>
<svg style="left:102px;top:1408px" width="32" height="29" viewBox="0 0 32 29">
  <rect x="0" y="0" width="32" height="23" fill="#b0bec5"/><rect x="3" y="3" width="26" height="17" fill="#0f4d3c"/>
  <path d="M3 11 L9 11 L11.5 6.5 L15 15.5 L18 10.5 L29 10.5" stroke="#3fe0b0" stroke-width="1.5" fill="none"/>
  <rect x="13.5" y="23" width="5" height="2.5" fill="#90a4ae"/><rect x="6" y="25.5" width="20" height="3.5" rx="1" fill="#90a4ae"/>
</svg>
<div class="a" style="left:143px;top:1410px;font-size:21px;line-height:24px;white-space:nowrap;color:#111">远程监控</div>
<div class="a" style="left:40px;top:1461px;width:20px;height:20px;border:1.3px solid #444;border-radius:4px;background:#f3f3f3"></div>
<div class="a" style="left:65px;top:1461px;font-size:17.5px;line-height:20px;white-space:nowrap;color:#222">跟踪终端文件夹</div>


<div id="status" class="a">
  <div class="a" style="left:10px;top:6px;font-size:18.4px;font-weight:bold;line-height:20px;white-space:nowrap">UNREGISTERED VERSION</div>
  <div class="a" style="left:254px;top:6px;font-size:18px;line-height:20px;white-space:nowrap">-</div>
  <div class="a" style="left:270px;top:5px;font-size:18px;line-height:20px;white-space:nowrap;color:#222">请在此处订阅专业版以支持MobaXterm:</div>
  <div class="a" style="left:592px;top:5px;font-size:18px;line-height:20px;white-space:nowrap;color:#1515f5">https://mobaxterm.mobatek.net</div>
</div>

</body></html>
